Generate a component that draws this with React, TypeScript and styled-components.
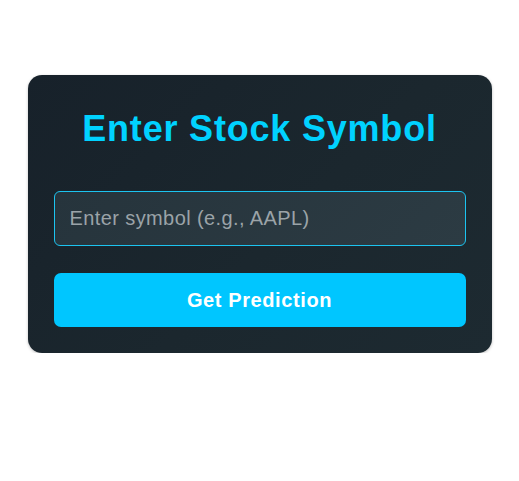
import { useState } from "react";
import styled, { createGlobalStyle } from "styled-components";

const GlobalStyle = createGlobalStyle`
  html, body {
    margin: 0;
    padding: 0;
    background: #ffffff;
    font-family: "Liberation Sans", Arial, sans-serif;
  }
`;

const Page = styled.main`
  display: flex;
  justify-content: center;
  padding-top: 75px;
`;

const Card = styled.section`
  width: 464px;
  box-sizing: border-box;
  padding: 34px 26px 26px;
  border-radius: 14px;
  background: linear-gradient(135deg, #17212a 0%, #1b272e 55%, #1d2a31 100%);
  box-shadow: 0 1px 3px rgba(0, 0, 0, 0.25);
  display: flex;
  flex-direction: column;
`;

const Title = styled.h1`
  margin: 0 0 42px;
  text-align: center;
  color: #00d2ff;
  font-size: 36px;
  line-height: 40px;
  font-weight: 700;
  letter-spacing: 0.8px;
`;

const SymbolInput = styled.input`
  height: 55px;
  box-sizing: border-box;
  padding: 0 15px;
  border: 1px solid #1cc4f0;
  border-radius: 6px;
  background: linear-gradient(135deg, #26343c 0%, #2c3b43 100%);
  color: #e6edf0;
  font-family: "Liberation Sans", Arial, sans-serif;
  font-size: 20px;
  letter-spacing: 0.4px;
  outline: none;

  &::placeholder {
    color: #9ba3a8;
  }
`;

const SubmitButton = styled.button`
  margin-top: 27px;
  height: 54px;
  border: none;
  border-radius: 7px;
  background: #00c6ff;
  color: #ffffff;
  font-family: "Liberation Sans", Arial, sans-serif;
  font-size: 20px;
  font-weight: 700;
  letter-spacing: 0.6px;
  cursor: pointer;
`;

export default function App() {
  const [symbol, setSymbol] = useState("");

  return (
    <>
      <GlobalStyle />
      <Page>
        <Card>
          <Title>Enter Stock Symbol</Title>
          <SymbolInput
            value={symbol}
            onChange={(e) => setSymbol(e.target.value.toUpperCase())}
            placeholder="Enter symbol (e.g., AAPL)"
          />
          <SubmitButton type="button">Get Prediction</SubmitButton>
        </Card>
      </Page>
    </>
  );
}
